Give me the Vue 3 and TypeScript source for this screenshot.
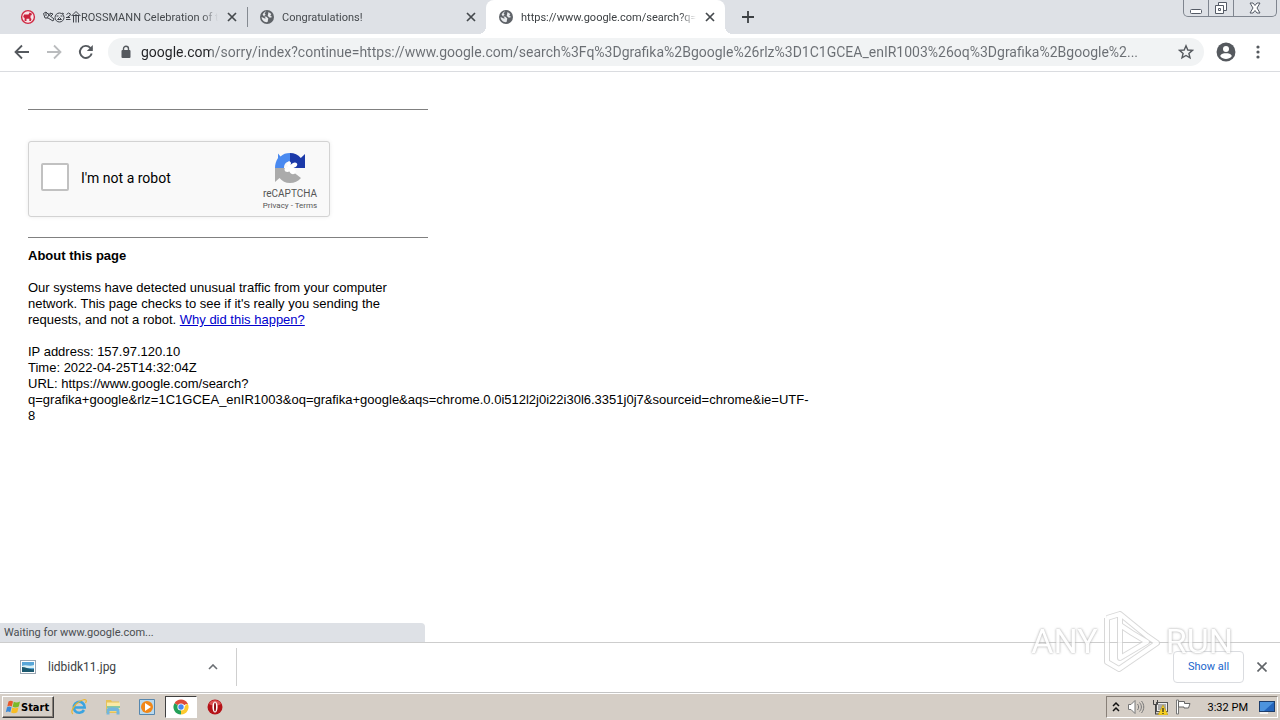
<script setup lang="ts">
import { ref } from 'vue'

interface Tab {
  id: number
  title: string
  icon: 'horse' | 'globe'
  active: boolean
}

const tabs = ref<Tab[]>([
  { id: 1, title: 'ROSSMANN Celebration of t', icon: 'horse', active: false },
  { id: 2, title: 'Congratulations!', icon: 'globe', active: false },
  { id: 3, title: 'https://www.google.com/search?q=', icon: 'globe', active: true },
])

const address = ref(
  'google.com/sorry/index?continue=https://www.google.com/search%3Fq%3Dgrafika%2Bgoogle%26rlz%3D1C1GCEA_enIR1003%26oq%3Dgrafika%2Bgoogle%2...',
)
const checked = ref(false)
</script>

<template>
  <div class="screen">
    <header class="tabstrip">
      <div v-for="tab in tabs" :key="tab.id" class="tab" :class="{ active: tab.active }">
        <svg v-if="tab.icon === 'horse'" class="favicon" viewBox="0 0 16 16">
          <circle cx="8" cy="8" r="6.4" fill="#f7e4e8" stroke="#cf2943" stroke-width="1.4" />
          <path d="M4 5.500h4.500l1.200-2 2.300 1.200-.5 1.500-1 .3V9l1 1-.6 2H9.300V9.800H6.500V12H4.600V9L3.200 8z" fill="#c9213c" />
        </svg>
        <svg v-else class="favicon" viewBox="0 0 16 16">
          <circle cx="8" cy="8" r="7" fill="#5f6368" />
          <path d="M7.400 2.300 5.600 4.200l1 1.600-1.800 1.500 2.700.4 1.800 1.700-.7 3.700C5.200 13.600 2.600 11 2.600 8.100l3.200 1.500 1.100-.4-3.300-3.400C4.300 3.900 5.700 2.700 7.400 2.300zM9.500 3.100l2.800 1.800-1 1.800 2 1.300-2.400.8-2.200-1.900z" fill="#e8eaed" />
        </svg>
        <svg v-if="tab.icon === 'horse'" class="emoji" viewBox="0 0 38 14" aria-hidden="true">
          <g fill="none" stroke="#3f434a" stroke-width="1">
            <path d="M.5 3.500 3 2l3 3 5 4-1 2-5-3H2zM3 2v4M6 5 4 8M7 3l3 1-2 2M5 4h3" />
            <circle cx="16.500" cy="7.500" r="4.500" />
            <path d="M13.500 6h2M17.500 6h2M14.500 9.500h4l-2-2zM19 3l2 1" />
            <path d="M23.500 4.500 25.500 3l2 1-1 2-2 1M23 9.500h4.500M23 7.500h4" />
            <path d="m28.500 6 4.500-4.500L37.500 6M30.500 6v6.500M33 4v8.500M35.500 6v6.500M29.500 5.500h7" />
          </g>
        </svg>
        <span class="tab-title">{{ tab.title }}</span>
        <button class="icon-btn tab-close" aria-label="Close tab">
          <svg viewBox="0 0 10 10" width="10" height="10"><path d="m1 1 8 8M9 1 1 9" stroke="#45494d" stroke-width="1.700" /></svg>
        </button>
      </div>
      <button class="icon-btn new-tab" aria-label="New tab">
        <svg viewBox="0 0 12 12" width="12" height="12"><path d="M6 0v12M0 6h12" stroke="#3c4043" stroke-width="1.800" /></svg>
      </button>
      <div class="window-controls">
        <button class="win" aria-label="Minimize">
          <svg viewBox="0 0 14 14" width="14" height="14"><rect x="1.500" y="8.500" width="11" height="4" rx="1" fill="#fff" stroke="#555b66" /></svg>
        </button>
        <button class="win" aria-label="Restore">
          <svg viewBox="0 0 14 14" width="14" height="14" fill="#fff" stroke="#555b66"><path d="M4.500 1.500h8v8h-8z" /><path d="M1.500 4.500h8v8h-8z" /><path d="M4.500 7.500h2v2h-2z" /></svg>
        </button>
        <button class="win wide" aria-label="Close">
          <svg viewBox="0 0 14 14" width="14" height="14"><path d="M2 2h3l2 2.500L9 2h3L9 7l3 5H9L7 9.500 5 12H2l3-5z" fill="#fff" stroke="#555b66" /></svg>
        </button>
      </div>
    </header>

    <nav class="toolbar">
      <button class="icon-btn nav" aria-label="Back">
        <svg viewBox="0 0 16 16" width="16" height="16"><path d="M15 8H2M8 1.500 1.500 8 8 14.500" fill="none" stroke="#55595e" stroke-width="1.800" /></svg>
      </button>
      <button class="icon-btn nav" aria-label="Forward">
        <svg viewBox="0 0 16 16" width="16" height="16"><path d="M1 8h13M8 1.500 14.500 8 8 14.500" fill="none" stroke="#babcbe" stroke-width="1.800" /></svg>
      </button>
      <button class="icon-btn nav" aria-label="Reload">
        <svg viewBox="0 0 16 16" width="16" height="16"><path d="M13.700 9.500A6 6 0 1 1 12.300 3.800L14 5.500" fill="none" stroke="#55595e" stroke-width="1.900" /><path d="M14.800 1v6H8.800z" fill="#55595e" /></svg>
      </button>
      <div class="omnibox">
        <svg class="lock" viewBox="0 0 10 14" width="10" height="14"><path d="M2.500 6V3.700a2.500 2.500 0 0 1 5 0V6" fill="none" stroke="#55595e" stroke-width="1.400" /><rect x="0.500" y="5" width="9" height="8" rx="1" fill="#55595e" /></svg>
        <input v-model="address" class="address" type="text" aria-label="Address" spellcheck="false" />
        <button class="icon-btn star" aria-label="Bookmark this page">
          <svg viewBox="0 0 16 16" width="16" height="16"><path d="m8 1.800 1.800 4.200 4.600.4-3.500 3 1.100 4.500L8 11.500l-4 2.400 1.100-4.500-3.500-3L6.200 6z" fill="none" stroke="#55595e" stroke-width="1.400" /></svg>
        </button>
      </div>
      <button class="icon-btn avatar" aria-label="Profile">
        <svg viewBox="0 0 18 18" width="20" height="20"><circle cx="9" cy="9" r="8.500" fill="#55595e" /><circle cx="9" cy="6.300" r="2.700" fill="#fff" /><path d="M3.700 12.500c1-2 3-2.300 5.300-2.300s4.300.3 5.300 2.300c-1.500 2-3.300 2.700-5.300 2.700s-3.800-.7-5.300-2.700z" fill="#fff" /></svg>
      </button>
      <button class="icon-btn kebab" aria-label="Menu">
        <svg viewBox="0 0 4 14" width="4" height="14" fill="#55595e"><circle cx="2" cy="2" r="1.600" /><circle cx="2" cy="7" r="1.600" /><circle cx="2" cy="12" r="1.600" /></svg>
      </button>
    </nav>

    <main class="page">
      <div class="content">
        <hr />
        <div class="captcha">
          <input id="robot" v-model="checked" type="checkbox" class="box" />
          <label for="robot">I'm not a robot</label>
          <div class="brand">
            <svg viewBox="0 0 32 32" width="32" height="32">
              <path d="M16 1C12 1 9 2 6.500 4.500L4 1.500V6C2 9 1 12 1 16h9c0-4 2-6.500 6-6.500z" fill="#4a8af0" />
              <path d="M16 1c4.500 0 8 1.500 10.800 5L31 2v14H16z" fill="#1c3aa9" />
              <path d="M1 16h15l4.500 5 6.500 5c-3 3.500-6.500 5-11 5-4.500 0-8-2-10.500-5L1 30z" fill="#ababab" />
              <path d="M15 9.500c2 0 2.500 1.500 1.500 3.500 2-2.500 5-3.500 6.500-1.500 1 2-1 3.500-3.500 4.500 2.500 1 3 3.500 1.500 5.500-2 1.500-4.500.5-5.500-2-2 1-5 .5-5-2 0-2 2-2.500 4-2-1.500-2-2-5.500.5-6z" fill="#fff" />
            </svg>
            <span class="brand-name">reCAPTCHA</span>
            <span class="brand-links"><a href="#privacy">Privacy</a> - <a href="#terms">Terms</a></span>
          </div>
        </div>
        <hr />
        <div class="about">
          <b>About this page</b>
          <p>
            Our systems have detected unusual traffic from your computer network. This page checks to see if it's
            really you sending the requests, and not a robot. <a href="#why">Why did this happen?</a>
          </p>
          <p>
            IP address: 157.97.120.10<br />Time: 2022-04-25T14:32:04Z<br />URL:
            https://www.google.com/search?<wbr />q=grafika+google&amp;rlz=1C1GCEA_enIR1003&amp;oq=grafika+google&amp;aqs=chrome.0.0i512l2j0i22i30l6.3351j0j7&amp;sourceid=chrome&amp;ie=UTF-<wbr />8
          </p>
        </div>
      </div>
      <div class="status">Waiting for www.google.com...</div>
    </main>

    <section class="downloads">
      <div class="download">
        <svg viewBox="0 0 16 14" width="16" height="14">
          <rect x="0.500" y="0.500" width="15" height="13" fill="#fff" stroke="#9aa6b2" />
          <rect x="2" y="2" width="12" height="10" fill="#58a6d8" />
          <path d="M2 6c4-2 7 1 12-1v3H2z" fill="#d9f0f5" />
          <path d="M2 7c4 0 7 3 12 2v3H2z" fill="#1c5a70" />
        </svg>
        <span class="file">lidbidk11.jpg</span>
        <button class="icon-btn" aria-label="Download options">
          <svg viewBox="0 0 10 6" width="10" height="6"><path d="m1 5 4-4 4 4" fill="none" stroke="#6a6e73" stroke-width="1.600" /></svg>
        </button>
      </div>
      <button class="show-all">Show all</button>
      <button class="icon-btn shelf-close" aria-label="Close downloads bar">
        <svg viewBox="0 0 10 10" width="10" height="10"><path d="m0.500 0.500 9 9M9.500 0.500l-9 9" stroke="#606468" stroke-width="1.600" /></svg>
      </button>
    </section>

    <footer class="taskbar">
      <button class="start">
        <svg viewBox="0 0 16 16" width="16" height="16">
          <path d="M3.500 2.500C5 1.500 6.500 1.500 8 2.500L6.800 7.500C5.300 6.500 3.800 6.500 2.300 7.500z" fill="#e8582a" />
          <path d="M8.800 2.800c1.500 1 4 1 6.200-.3L13.800 7.500c-2 1.300-4.500 1.300-6.200.3z" fill="#7ab929" />
          <path d="M2 8.300c1.500-1 3-1 4.500 0L5.300 13.300c-1.500-1-3-1-4.500 0z" fill="#3b8ad8" />
          <path d="M7.300 8.600c1.700 1 4.200 1 6.200-.3l-1.200 5c-2 1.300-4.500 1.300-6.200.3z" fill="#f8bd24" />
        </svg>
        <b>Start</b>
      </button>
      <div class="quick">
        <button class="task" aria-label="Internet Explorer">
          <svg viewBox="0 0 18 18" width="18" height="18"><path d="M14 12A5.500 5.500 0 1 1 14.700 9.500H5" fill="none" stroke="#3ba4e0" stroke-width="2.600" /><path d="M3 16C-1 14 6 3 14.500 1.500c2.500 0 2 2 1 3.500" fill="none" stroke="#ecb52a" stroke-width="1.200" /></svg>
        </button>
        <button class="task" aria-label="Explorer">
          <svg viewBox="0 0 18 18" width="18" height="18"><path d="M2 2h5l1 1.500h7V15H2z" fill="#e6c257" /><path d="M3 4.500h13v9H3z" fill="#fae9a6" /><path d="M3 8h13v2H3z" fill="#8bc8a0" /><path d="M2.500 16.500v-5c0-3 13-3 13 0v5h-3V13h-7v3.500z" fill="#72b6dd" /></svg>
        </button>
        <button class="task" aria-label="Media Player">
          <svg viewBox="0 0 18 18" width="18" height="18"><path d="M1.500 1.500h15v15h-15z" fill="#b9d9ee" stroke="#5687ae" /><circle cx="9" cy="9" r="6" fill="#f18718" /><path d="m7 5 6 4-6 4z" fill="#fff" /></svg>
        </button>
        <button class="task pressed" aria-label="Chrome">
          <svg viewBox="0 0 16 16" width="16" height="16"><path d="M8 8 1.500 4.200A7.500 7.500 0 0 1 14.500 4.200z" fill="#dd4b39" /><path d="M8 8 1.500 4.200A7.500 7.500 0 0 0 8 15.500z" fill="#23a058" /><path d="M8 8h3l3.500-3.800A7.500 7.500 0 0 1 8 15.500z" fill="#fdca2e" /><path d="M8 4.500h6.500" stroke="#dd4b39" /><circle cx="8" cy="8" r="3.600" fill="#fff" /><circle cx="8" cy="8" r="2.700" fill="#4688f1" /></svg>
        </button>
        <button class="task" aria-label="Opera">
          <svg viewBox="0 0 18 18" width="18" height="18"><circle cx="9" cy="9" r="7.500" fill="#b51218" /><path d="M3 6c2-5 10-5 12 0-3 2-9 2-12 0z" fill="#dc5254" /><ellipse cx="9" cy="9" rx="2.600" ry="5.500" fill="#fff" /><ellipse cx="9" cy="9" rx="1" ry="4.500" fill="#8e0c12" /></svg>
        </button>
      </div>
      <div class="tray">
        <svg viewBox="0 0 8 12" width="8" height="12"><path d="m1 5 3-3 3 3M1 10l3-3 3 3" fill="none" stroke="#111" stroke-width="1.500" /></svg>
        <svg viewBox="0 0 18 16" width="18" height="16" fill="#fff" stroke="#777"><path d="M1.500 5.500H4l4-4v13l-4-4H1.500z" /><path d="M10.500 5c1.500 2 1.500 4 0 6M12.500 3.500c2.500 3 2.500 6 0 9M14.500 2c3 4 3 8 0 12" fill="none" /></svg>
        <svg viewBox="0 0 16 16" width="16" height="16"><rect x="4.500" y="3.500" width="11" height="9" fill="#eee" stroke="#555" /><path d="M6 5h8v6H6z" fill="#aaa" /><path d="M1.500 1v4.500h4V1M3.500 5.500V15M3 15h6" fill="none" stroke="#444" /><path d="m11 6 5 10H6z" fill="#f7d022" stroke="#b69005" stroke-width=".5" /><path d="M11 9v4M11 14v1" stroke="#222" stroke-width="1.200" /></svg>
        <svg viewBox="0 0 16 16" width="16" height="16"><path d="M1.500 1v14h2V1z" fill="#fff" stroke="#777" /><path d="M3.500 2.500h6v2H15L13.500 9H9V8H3.500z" fill="#fff" stroke="#666" /></svg>
        <time>3:32 PM</time>
        <svg viewBox="0 0 16 14" width="16" height="14"><rect x=".5" y="1.500" width="15" height="10" fill="#2465bc" stroke="#1c3d6b" /><path d="M1 2h14L5 11H1z" fill="#4d94dd" /><path d="M1 13h8" stroke="#fff" stroke-width="1.500" /></svg>
      </div>
    </footer>

    <div class="watermark" aria-hidden="true">
      <span>ANY</span>
      <svg viewBox="0 0 58 64" width="58" height="64">
        <g fill="none" stroke-linejoin="round">
          <path d="M4 9v44l12 7 38-26-10-7L17 5 4 9M17 5v44l27-16-15-9-12-8" stroke="#cfcfcf" stroke-width="6" />
          <path d="M4 9v44l12 7 38-26-10-7L17 5 4 9M17 5v44l27-16-15-9-12-8" stroke="#fff" stroke-width="4" />
        </g>
      </svg>
      <span>RUN</span>
    </div>
  </div>
</template>

<style>
html,
body {
  margin: 0;
}
</style>

<style scoped>
* {
  box-sizing: border-box;
}
.screen {
  position: relative;
  display: flex;
  flex-direction: column;
  min-height: 100vh;
  overflow: hidden;
  background: #fff;
  color: #000;
  font-family: Roboto, 'Noto Sans', sans-serif;
  font-size: 11px;
}
button {
  font: inherit;
  padding: 0;
}
svg {
  display: block;
  flex: none;
}
.icon-btn {
  display: flex;
  align-items: center;
  justify-content: center;
  flex: none;
  border: 0;
  background: transparent;
}
.tabstrip {
  display: flex;
  height: 34px;
  padding-left: 8px;
  background: #dee1e6;
}
.tab {
  position: relative;
  display: flex;
  align-items: center;
  width: 239px;
  padding: 0 7px 0 12px;
  color: #45494d;
}
.tab:first-child::after {
  content: '';
  width: 1px;
  height: 20px;
  position: absolute;
  right: -1px;
  top: 7px;
  background: #858a91;
}
.tab.active {
  background: #fff;
  border-radius: 8px 8px 0 0;
  color: #3c4043;
}
.tab.active::before,
.tab.active::after {
  content: '';
  position: absolute;
  bottom: 0;
  width: 8px;
  height: 8px;
}
.tab.active::before {
  left: -8px;
  background: radial-gradient(circle at 0 0, #dee1e6 8px, #fff 8px);
}
.tab.active::after {
  right: -8px;
  background: radial-gradient(circle at 100% 0, #dee1e6 8px, #fff 8px);
}
.favicon {
  width: 16px;
  height: 16px;
  margin-right: 7px;
}
.emoji {
  width: 38px;
  height: 14px;
}
.tab-title {
  flex: 1;
  min-width: 0;
  overflow: hidden;
  white-space: nowrap;
  mask-image: linear-gradient(to right, #000 calc(100% - 16px), transparent);
}
.tab-close {
  width: 16px;
  height: 16px;
  margin-left: 6px;
}
.new-tab {
  width: 28px;
  margin-left: 9px;
}
.window-controls {
  display: flex;
  height: 17px;
  margin: 0 3px 0 auto;
  border: 1px solid #7f858f;
  border-top: 0;
  border-radius: 0 0 5px 5px;
}
.win {
  display: flex;
  align-items: center;
  justify-content: center;
  width: 25px;
  border: 0;
  border-right: 1px solid #7f858f;
  background: transparent;
}
.win.wide {
  width: 42px;
  border-right: 0;
}
.toolbar {
  display: flex;
  align-items: center;
  height: 38px;
  padding: 0 12px 1px 6px;
  border-bottom: 1px solid #dadce0;
}
.nav {
  width: 32px;
  height: 32px;
}
.omnibox {
  display: flex;
  align-items: center;
  flex: 1;
  min-width: 0;
  height: 28px;
  margin-left: 6px;
  padding: 0 10px 0 13px;
  border-radius: 14px;
  background: #f1f3f4;
}
.address {
  flex: 1;
  min-width: 0;
  height: 24px;
  margin: 0 8px 0 10px;
  padding: 0;
  border: 0;
  outline: 0;
  background: linear-gradient(to right, #202124 70px, #6a6e73 70px);
  background-clip: text;
  color: transparent;
  font: 14px Roboto, 'Noto Sans', sans-serif;
}
.avatar {
  width: 28px;
  margin-left: 8px;
}
.kebab {
  width: 20px;
  margin-left: 8px;
}
.page {
  position: relative;
  flex: 1;
  padding: 37px 28px 24px;
}
.content {
  width: 400px;
  font: 13px/16px 'Liberation Sans', Arial, sans-serif;
}
hr {
  height: 1px;
  margin: 0;
  border: 0;
  background: #808080;
}
.captcha {
  display: flex;
  align-items: center;
  width: 302px;
  height: 76px;
  margin: 31px 0 20px;
  padding: 0 8px 0 12px;
  border: 1px solid #d3d3d3;
  border-radius: 3px;
  background: #f9f9f9;
  box-shadow: 0 0 4px rgba(0, 0, 0, 0.08);
}
.box {
  appearance: none;
  width: 28px;
  height: 28px;
  margin: 0 12px 4px 0;
  border: 2px solid #c1c1c1;
  border-radius: 2px;
  background: #fff;
}
.captcha label {
  flex: 1;
  padding-bottom: 2px;
  font: 14px/17px Roboto, 'Liberation Sans', sans-serif;
}
.brand {
  display: flex;
  flex-direction: column;
  align-items: center;
  width: 62px;
  padding-top: 6px;
  color: #555;
  font-family: Roboto, 'Liberation Sans', sans-serif;
}
.brand-name {
  margin-top: 4px;
  font-size: 10px;
  line-height: 12px;
}
.brand-links {
  font-size: 8px;
  line-height: 12px;
  white-space: nowrap;
}
.brand-links a {
  color: inherit;
  text-decoration: none;
}
.about {
  margin-top: 10px;
}
.about p {
  margin: 16px 0 0;
}
.about a {
  color: #0000cc;
}
.status {
  position: absolute;
  left: 0;
  bottom: 0;
  width: 425px;
  height: 19px;
  padding-left: 4px;
  border-radius: 0 4px 0 0;
  background: #dee1e6;
  color: #4a4d51;
  line-height: 19px;
}
.downloads {
  display: flex;
  align-items: center;
  height: 51px;
  padding: 0 8px 2px 0;
  border-top: 1px solid #cdcdcd;
  border-bottom: 1px solid #c4c4c4;
}
.download {
  display: flex;
  align-items: center;
  width: 237px;
  height: 38px;
  padding: 0 18px 0 20px;
  border-right: 1px solid #cfcfcf;
  color: #3c4043;
  font-size: 12px;
}
.file {
  flex: 1;
  margin-left: 12px;
}
.show-all {
  width: 71px;
  height: 32px;
  margin-left: auto;
  border: 1px solid #dadce0;
  border-radius: 4px;
  background: #fff;
  color: #1a66cc;
}
.shelf-close {
  width: 20px;
  height: 20px;
  margin-left: 8px;
}
.taskbar {
  display: flex;
  align-items: center;
  height: 27px;
  padding: 0 2px;
  border-top: 1px solid #fff;
  background: #d5cec6;
}
.start {
  display: flex;
  align-items: center;
  width: 52px;
  height: 22px;
  padding: 0 2px;
  border: 1px solid;
  border-color: #fff #404040 #404040 #fff;
  background: #d5cec6;
  box-shadow: inset -1px -1px #888078;
  font-family: 'DejaVu Sans Condensed', 'DejaVu Sans', sans-serif;
}
.quick {
  display: flex;
  align-items: center;
  margin-left: 9px;
  gap: 2px;
}
.task {
  display: flex;
  align-items: center;
  justify-content: center;
  width: 32px;
  height: 22px;
  border: 0;
  background: transparent;
}
.task.pressed {
  border: 1px solid;
  border-color: #404040 #fff #fff #404040;
  background: #fff;
}
.tray {
  display: flex;
  align-items: center;
  gap: 7px;
  height: 22px;
  margin-left: auto;
  padding: 0 2px 0 5px;
  border: 1px solid;
  border-color: #888078 #fff #fff #888078;
}
.tray time {
  margin: 0 4px 0 10px;
}
.watermark {
  position: absolute;
  right: 47px;
  bottom: 47px;
  display: flex;
  align-items: center;
  gap: 5px;
  color: #fff;
  font: 34px/64px Roboto, sans-serif;
  text-shadow: 0 0 2px #aaa, 0 0 3px #bbb;
  opacity: 0.8;
  pointer-events: none;
}
</style>
